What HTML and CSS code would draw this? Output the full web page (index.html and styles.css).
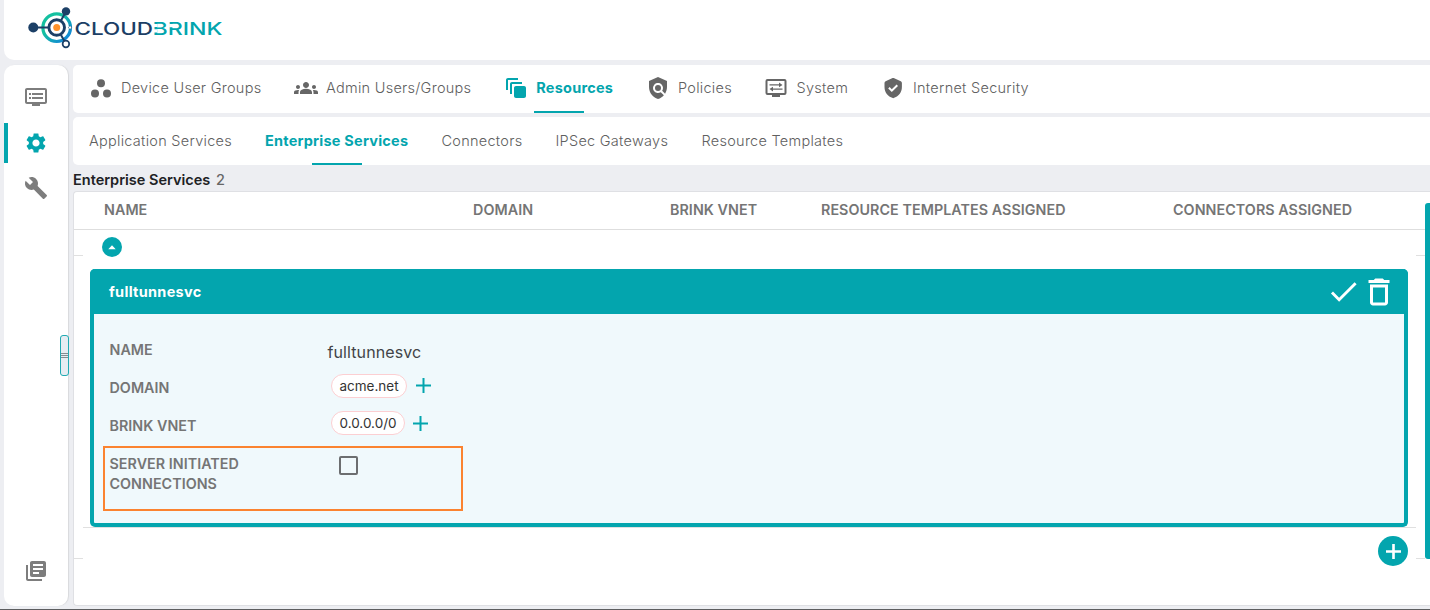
FILE: index.html
```html
<!DOCTYPE html>
<html lang="en">
<head>
<meta charset="utf-8">
<title>Cloudbrink</title>
<link rel="stylesheet" href="styles.css">
</head>
<body>
<header class="topbar">
  <svg class="logo" width="200" height="44" viewBox="26 6 200 44">
    <defs>
      <linearGradient id="ring" x1="0" y1="0" x2="1" y2="1">
        <stop offset="0.35" stop-color="#14c0a0"/><stop offset="0.9" stop-color="#1286d8"/>
      </linearGradient>
    </defs>
    <circle cx="56.700" cy="27.700" r="13.800" fill="none" stroke="url(#ring)" stroke-width="3.200"/>
    <path d="M35 27.500H49M61 20.500L66 11.500M61 35L64.700 41.500" stroke="#1c3f66" stroke-width="2"/>
    <circle cx="56.700" cy="27.500" r="7.800" fill="#fff" stroke="#1c3f66" stroke-width="2.900"/>
    <circle cx="56.700" cy="27.500" r="3.500" fill="#ff922b"/>
    <circle cx="33.300" cy="27.500" r="5" fill="#1c3f66"/>
    <circle cx="66" cy="11.400" r="4.200" fill="#1c3f66"/>
    <circle cx="65.900" cy="44" r="3.300" fill="#fff" stroke="#1c3f66" stroke-width="1.700"/>
    <circle cx="70" cy="27.500" r="1.500" fill="#fff" stroke="#1c3f66" stroke-width=".8" stroke-dasharray="1 .8"/>
    <text class="word word-navy" x="74.500" y="34.600" textLength="78.500" lengthAdjust="spacingAndGlyphs">CLOUD</text>
    <text class="word word-teal" x="152.500" y="34.600" textLength="70" lengthAdjust="spacingAndGlyphs">BRINK</text>
    <path d="M153 23.900h4.300v3.200h-4.300zM153 29.200h4.300v3.300h-4.300zM169.200 23.900h3.800v3.400h-3.800z" fill="#fff"/>
  </svg>
</header>

<div class="shell">
  <aside class="side">
    <a class="side-item"><svg class="icon" viewBox="0 0 24 24"><path d="M21 3H3c-1.100 0-2 .9-2 2v12c0 1.100.9 2 2 2h5v2h8v-2h5c1.100 0 2-.9 2-2V5c0-1.100-.9-2-2-2zm0 14H3V5h18v12zm-2-9H8v2h11V8zm0 4H8v2h11v-2zM7 8H5v2h2V8zm0 4H5v2h2v-2z"/></svg></a>
    <a class="side-item side-active"><svg class="icon" viewBox="0 0 24 24"><path d="M19.140 12.940c.04-.3.06-.61.06-.94 0-.32-.02-.64-.07-.94l2.030-1.580c.18-.14.23-.41.12-.61l-1.920-3.320c-.12-.22-.37-.29-.59-.22l-2.390.96c-.5-.38-1.030-.7-1.620-.94l-.36-2.540c-.04-.24-.24-.41-.48-.41h-3.840c-.24 0-.43.17-.47.41l-.36 2.540c-.59.24-1.130.57-1.620.94l-2.390-.96c-.22-.08-.47 0-.59.22L2.740 8.870c-.12.21-.08.47.12.61l2.030 1.580c-.05.3-.09.63-.09.94s.02.64.07.94l-2.030 1.580c-.18.14-.23.41-.12.61l1.920 3.320c.12.22.37.29.59.22l2.390-.96c.5.38 1.030.7 1.620.94l.36 2.540c.05.24.24.41.48.41h3.840c.24 0 .44-.17.47-.41l.36-2.540c.59-.24 1.130-.56 1.620-.94l2.390.96c.22.08.47 0 .59-.22l1.920-3.320c.12-.22.07-.47-.12-.61l-2.010-1.580zM12 15.600c-1.980 0-3.600-1.620-3.600-3.600s1.620-3.600 3.600-3.600 3.600 1.620 3.600 3.600-1.620 3.600-3.600 3.600z"/></svg></a>
    <a class="side-item"><svg class="icon" viewBox="0 0 24 24"><path d="M22.700 19l-9.100-9.100c.9-2.300.4-5-1.500-6.900-2-2-5-2.400-7.400-1.300L9 6 6 9 1.600 4.700C.4 7.100.9 10.100 2.900 12.100c1.900 1.900 4.600 2.400 6.900 1.500l9.100 9.100c.4.4 1 .4 1.400 0l2.300-2.300c.5-.4.5-1.100.1-1.400z"/></svg></a>
    <a class="side-item side-last"><svg class="icon" viewBox="0 0 24 24"><path d="M4 6H2v14c0 1.100.9 2 2 2h14v-2H4V6zm16-4H8c-1.100 0-2 .9-2 2v12c0 1.100.9 2 2 2h12c1.100 0 2-.9 2-2V4c0-1.100-.9-2-2-2zm-1 9H9V9h10v2zm-4 4H9v-2h6v2zm4-8H9V5h10v2z"/></svg></a>
    <div class="splitter"><i></i><i></i><i></i></div>
  </aside>

  <main class="main">
    <nav class="tabs tabs-primary">
      <a class="tab"><svg class="icon" viewBox="0 0 24 24"><circle cx="12" cy="7.200" r="4"/><circle cx="6" cy="17.400" r="4"/><circle cx="18" cy="17.400" r="4"/></svg><span class="l1">Device User Groups</span></a>
      <a class="tab"><svg class="icon" viewBox="0 0 24 24"><path d="M12 12.750c1.630 0 3.070.39 4.240.9 1.080.48 1.760 1.560 1.760 2.730V18H6v-1.610c0-1.180.68-2.260 1.760-2.730 1.170-.52 2.610-.91 4.240-.91zM4 13c1.100 0 2-.9 2-2s-.9-2-2-2-2 .9-2 2 .9 2 2 2zm1.130 1.100C4.760 14.040 4.390 14 4 14c-.99 0-1.930.21-2.780.58C.48 14.900 0 15.620 0 16.430V18h4.500v-1.610c0-.83.23-1.610.63-2.290zM20 13c1.100 0 2-.9 2-2s-.9-2-2-2-2 .9-2 2 .9 2 2 2zm4 3.430c0-.81-.48-1.530-1.220-1.850C21.930 14.210 20.990 14 20 14c-.39 0-.76.04-1.130.1.4.68.63 1.460.63 2.290V18H24v-1.570zM12 6c1.660 0 3 1.340 3 3s-1.340 3-3 3-3-1.340-3-3 1.340-3 3-3z"/></svg><span class="l2">Admin Users/Groups</span></a>
      <a class="tab tab-active"><svg class="icon" viewBox="0 0 24 24"><path d="M14 2H4c-1.100 0-2 .9-2 2v10h2V4h10V2zm4 4H8c-1.100 0-2 .9-2 2v10h2V8h10V6zm2 4h-8c-1.100 0-2 .9-2 2v8c0 1.100.9 2 2 2h8c1.100 0 2-.9 2-2v-8c0-1.100-.9-2-2-2z"/></svg><span class="l3">Resources</span></a>
      <a class="tab"><svg class="icon" viewBox="0 0 24 24"><path d="M21 5l-9-4-9 4v6c0 5.550 3.840 10.740 9 12 2.300-.56 4.330-1.900 5.880-3.710l-3.120-3.120c-1.940 1.290-4.580 1.070-6.290-.64-1.950-1.950-1.950-5.120 0-7.070 1.950-1.950 5.120-1.950 7.070 0 1.710 1.710 1.920 4.350.64 6.290l2.900 2.900C20.290 15.690 21 13.380 21 11V5z"/><circle cx="12" cy="12" r="3"/></svg><span class="l4">Policies</span></a>
      <a class="tab"><svg class="icon" viewBox="0 0 24 24"><path fill-rule="evenodd" d="M3.500 3h17a2 2 0 0 1 2 2v12a2 2 0 0 1-2 2H16v2H8v-2H3.500a2 2 0 0 1-2-2V5a2 2 0 0 1 2-2zm0 2v12h17V5zM5.500 8.200H15V6.500l3.500 2.400L15 11.300V9.600H5.500zM18.500 12.400H9v-1.700l-3.500 2.400L9 15.500v-1.700h9.500z"/></svg><span class="l5">System</span></a>
      <a class="tab"><svg class="icon" viewBox="0 0 24 24"><path fill-rule="evenodd" d="M12.700 2.100l7.100 3.100q1.100.5 1.100 1.700v4.200c0 5.100-3.400 9.700-8.300 11q-.4.100-.8 0C6.900 20.800 3.500 16.200 3.500 11.100V6.900q0-1.200 1.100-1.700l7-3.100q.6-.3 1.100 0zM7.200 12.500l3.600 3.600 6.200-6.200-1.400-1.400-4.800 4.800-2.200-2.200z"/></svg><span class="l6">Internet Security</span></a>
    </nav>
    <nav class="tabs tabs-secondary">
      <a class="tab"><span class="m1">Application Services</span></a>
      <a class="tab tab-active"><span class="m2">Enterprise Services</span></a>
      <a class="tab"><span class="m3">Connectors</span></a>
      <a class="tab"><span class="m4">IPSec Gateways</span></a>
      <a class="tab"><span class="m5">Resource Templates</span></a>
    </nav>
    <h1 class="title"><span class="title-text">Enterprise Services</span> <span class="count">2</span></h1>

    <section class="panel">
      <div class="thead">
        <span>NAME</span><span>DOMAIN</span><span>BRINK VNET</span><span>RESOURCE TEMPLATES ASSIGNED</span><span>CONNECTORS ASSIGNED</span>
      </div>
      <div class="rows">
        <div class="gutter"><div class="g-top"></div><div class="g-mid"></div></div>
        <div class="detail">
          <div class="detail-inner">
            <button class="toggle"><svg width="8" height="5" viewBox="0 0 8 5"><path d="M4 .3L7.700 4.200H.3z" fill="#fff"/></svg></button>
            <article class="card">
              <div class="card-head">
                <span class="card-name">fulltunnesvc</span>
                <svg class="check" viewBox="0 0 24 24"><path d="M9 16.200L4.800 12l-1.400 1.400L9 19 21 7l-1.400-1.400L9 16.200z"/></svg>
                <svg class="trash" viewBox="0 0 24 24"><path d="M6 19c0 1.100.9 2 2 2h8c1.100 0 2-.9 2-2V7H6v12zM8 9h8v10H8V9zm7.500-5l-1-1h-5l-1 1H5v2h14V4h-3.500z"/></svg>
              </div>
              <div class="card-body">
                <div class="field"><label>NAME</label><span class="plain">fulltunnesvc</span></div>
                <div class="field field-chip"><label>DOMAIN</label><span class="chip chip-domain">acme.net</span><svg class="plus" viewBox="0 0 15 15"><path d="M7.500 0v15M0 7.500h15"/></svg></div>
                <div class="field field-chip"><label>BRINK VNET</label><span class="chip chip-net">0.0.0.0/0</span><svg class="plus" viewBox="0 0 15 15"><path d="M7.500 0v15M0 7.500h15"/></svg></div>
                <div class="field field-check"><label>SERVER INITIATED<br>CONNECTIONS</label><span class="box"></span></div>
                <div class="highlight"></div>
              </div>
            </article>
          </div>
          <button class="add"><svg viewBox="0 0 16 16"><path d="M8 0v16M0 8h16"/></svg></button>
        </div>
        <div class="gutter"><div class="g-top"></div><div class="g-mid"></div></div>
      </div>
      <div class="scrollbar"></div>
    </section>
  </main>
</div>
</body>
</html>
```

FILE: styles.css
```css
* { box-sizing: border-box; }
html, body { margin: 0; }
body {
  width: 1430px; height: 610px; overflow: hidden;
  display: flex; flex-direction: column;
  padding-left: 4px;
  background: #edeef2;
  border-bottom: 1px solid #5d5e60;
  font-family: Inter, "Liberation Sans", sans-serif;
  color: #757575;
}
button { border: 0; padding: 0; display: flex; align-items: center; justify-content: center; }
.topbar { flex: none; height: 60px; background: #fff; border-radius: 0 0 0 10px; padding: 6px 0 0 22px; }
.logo { display: block; }
.word { font-size: 17.5px; font-weight: 500; }
.word-navy { fill: #1c3f66; }
.word-teal { fill: #03a5ae; }

.shell { display: flex; gap: 5px; flex: 1; min-height: 0; padding: 5px 0 3px; }
.side {
  position: relative; flex: none; width: 64px; height: 541px;
  display: flex; flex-direction: column;
  background: #fff; border-radius: 10px; padding: 12px 0 16px;
  box-shadow: 1px 0 1px #d8d9dc;
}
.icon { flex: none; display: block; width: 24px; height: 24px; fill: #666; }
.side .icon { fill: #7d7d7d; }
.side-item { height: 40px; margin-bottom: 6px; display: flex; align-items: center; justify-content: center; }
.side-active { border-left: 4px solid #03a5ae; padding-right: 4px; }
.side-active + .side-item { margin-top: -1px; }
.side .side-active .icon { fill: #03a5ae; }
.side-item.side-last { margin-top: auto; margin-bottom: 0; }
.side-last .icon { margin-top: 2px; }
.splitter {
  position: absolute; left: 56px; top: 270px; width: 9px; height: 41px;
  border: 1px solid #21aab2; border-radius: 3px; background: #e6edf2;
  display: flex; flex-direction: column; justify-content: center; gap: 1px;
}
.splitter i { height: 1px; background: #828c90; }

.main { flex: 1; min-width: 0; display: flex; flex-direction: column; }
.tabs { flex: none; display: flex; background: #fff; border-radius: 5px 0 0 5px; padding-left: 16px; gap: 33px; }
.tabs-primary { height: 48px; }
.tabs-secondary { height: 48px; margin-top: 4px; }
.tab {
  position: relative; display: flex; align-items: center; gap: 8px; padding-bottom: 2px;
  font-size: 14.5px; font-weight: 300; letter-spacing: .27px; white-space: nowrap; color: #606060;
}
.tabs-primary .tab > span { margin-top: -1px; }
.tab > span { display: block; }
.tab-active { color: #03a5ae; font-weight: 700; letter-spacing: .22px; }
.tab-active .icon { fill: #03a5ae; }
.tab-active::after {
  content: ""; position: absolute; left: 50%; bottom: 0; width: 50px; height: 2px;
  margin-left: -25px; background: #03a5ae;
}
.l1 { width: 140px; } .l2 { width: 145.3px; } .l3 { width: 76.7px; } .l4 { width: 53.5px; } .l5 { width: 51.5px; } .l6 { width: 118px; }
.m1 { width: 143px; } .m2 { width: 143.5px; } .m3 { width: 81px; } .m4 { width: 113px; } .m5 { width: 143px; }

.title { flex: none; margin: 0; height: 26px; line-height: 30px; font-size: 14.5px; font-weight: 600; color: #202124; white-space: nowrap; }
.count { color: #666; font-weight: 500; margin-left: 2px; }

.panel { position: relative; height: 415px; background: #fff; border: 1px solid #dfe0e4; border-right: 0; border-radius: 4px 0 0 4px; }
.thead {
  display: grid; grid-template-columns: 369px 197px 151px 352px auto;
  padding-left: 30px; height: 38px; line-height: 36px; border-bottom: 1px solid #dedede;
  font-size: 14.3px; font-weight: 600; letter-spacing: .06px; color: #757575; white-space: nowrap;
}
.rows { display: flex; height: 330px; padding-right: 5px; }
.gutter { flex: none; width: 9px; }
.g-top { height: 26px; border-bottom: 1px solid #e0e0e0; }
.g-mid { height: 303px; border-bottom: 1px solid #e0e0e0; }
.detail { flex: 1; display: flex; flex-direction: column; }
.detail-inner { flex: none; height: 298px; padding: 7px 8px 0 7px; border-bottom: 1px solid #e0e0e0; }
.toggle { width: 20px; height: 20px; margin-left: 11.5px; border-radius: 50%; background: #03a5ae; }
.card { height: 258px; margin-top: 12px; border: 4px solid #03a5ae; border-top: 0; border-radius: 5px; background: #f0f9fc; }
.card-head { height: 45px; display: flex; align-items: center; background: #03a5ae; margin: 0 -4px; padding: 0 11px 0 19px; border-radius: 5px 5px 0 0; }
.card-name { flex: 1; color: #fff; font-size: 14.5px; letter-spacing: .3px; font-weight: 700; }
.check { width: 35px; height: 35px; fill: #fff; }
.trash { width: 36px; height: 36px; fill: #fff; }
.card-body { position: relative; height: 209px; padding: 17px 0 0 15.5px; }
.field { display: flex; height: 38px; font-size: 14.3px; line-height: 38px; }
.field label { flex: none; width: 218px; font-weight: 600; letter-spacing: .04px; color: #757575; }
.plain { font-size: 16px; letter-spacing: .1px; padding-top: 2px; color: #424447; }
.chip {
  height: 24px; line-height: 23px; margin: 5px 9px 0 3.5px; text-align: center;
  border: 1px solid #fccfd2; border-radius: 12px; background: #fff; color: #333; font-size: 13.5px;
}
.chip-domain { width: 76px; }
.chip-net { width: 74px; margin-top: 4px; margin-right: 8px; }
.plus { width: 15px; height: 15px; margin-top: 9px; stroke: #03a5ae; stroke-width: 2; }
.field-check { height: 50px; padding-top: 9px; line-height: 20px; }
.box { width: 19px; height: 19px; margin: 2px 0 0 11px; border: 2px solid #6c6e70; border-radius: 2px; }
.highlight { position: absolute; left: 9px; top: 132px; width: 360px; height: 65px; border: 2px solid #fb8330; }
.add { flex: none; width: 30px; height: 30px; margin: 8px 8px 0 auto; border-radius: 50%; background: #03a5ae; }
.add svg { width: 15px; height: 15px; stroke: #fff; stroke-width: 2.800; }
.scrollbar { position: absolute; right: 0; top: 11px; width: 5px; height: 356px; background: #03a5ae; border-radius: 3px 0 0 3px; }
```
